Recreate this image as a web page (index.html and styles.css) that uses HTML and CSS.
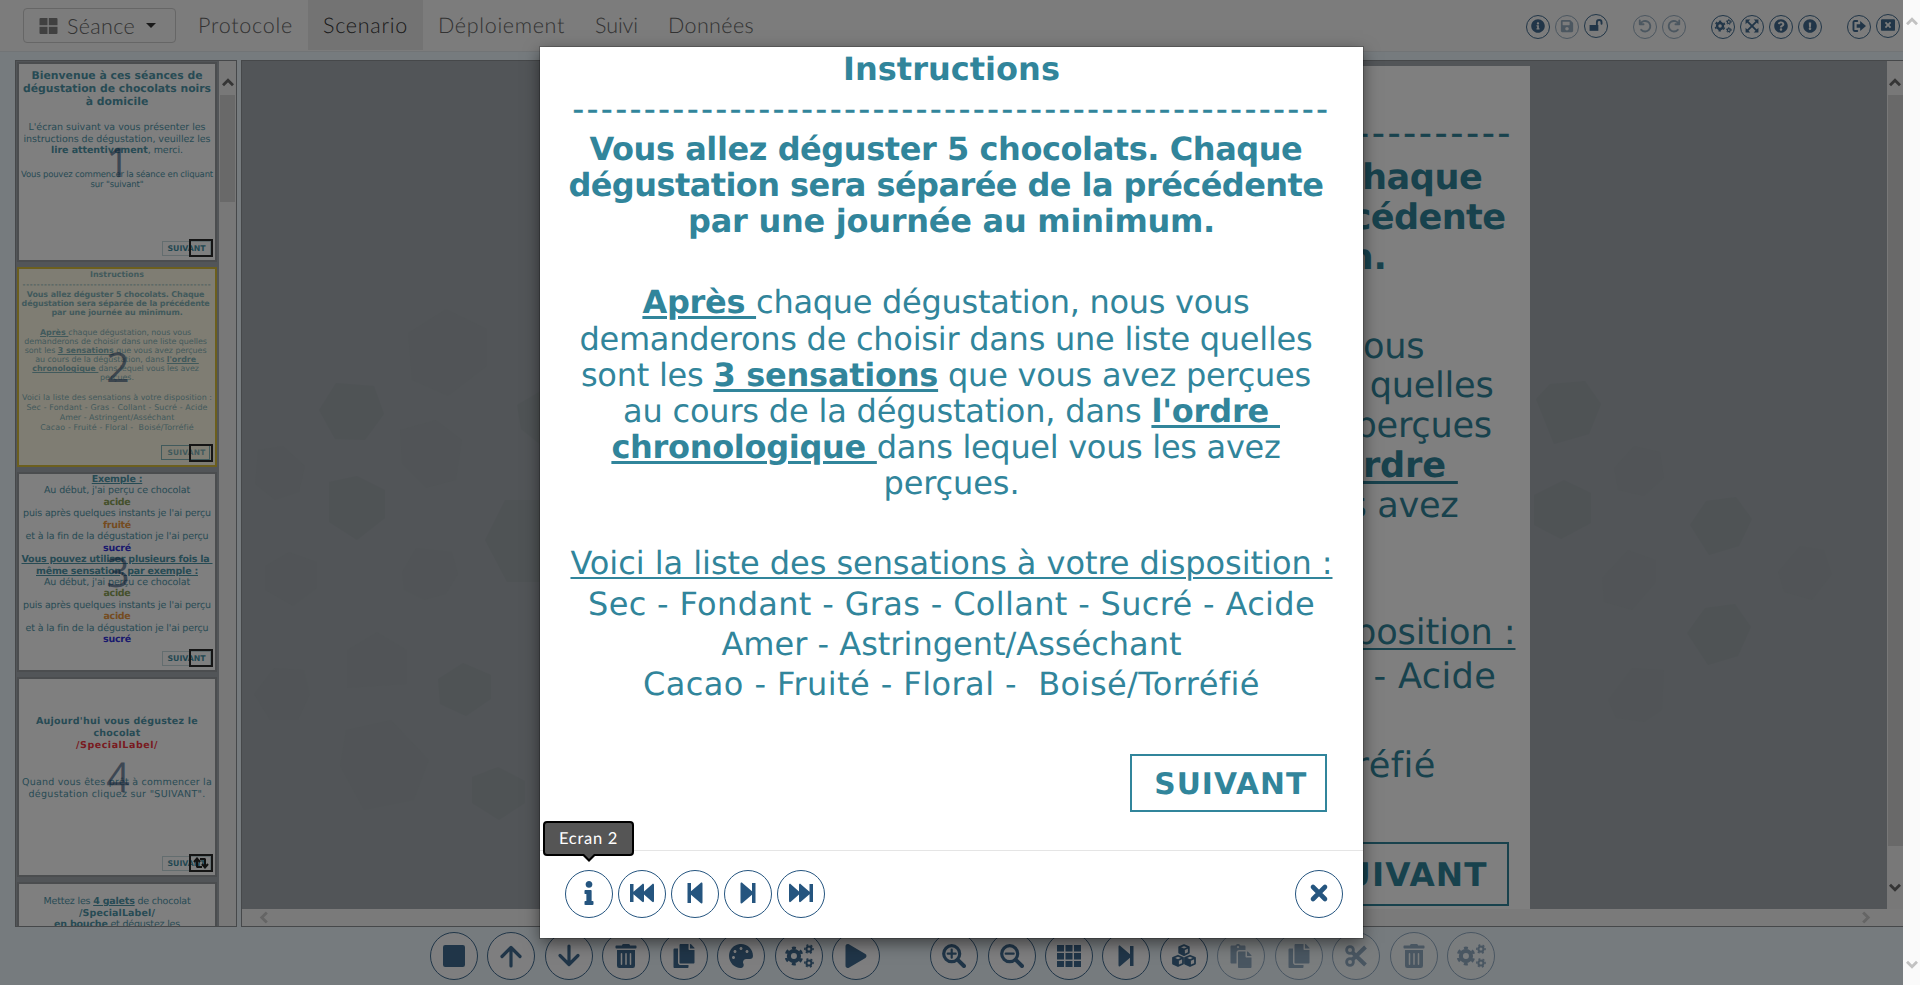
FILE: index.html
```html
<!DOCTYPE html>
<html lang="fr">
<head>
<meta charset="utf-8">
<title>Scenario</title>
<link rel="stylesheet" href="styles.css">
</head>
<body>
<svg class="sprite" aria-hidden="true">
  <symbol id="square" viewBox="0 0 24 24"><rect x="1" y="1" width="22" height="22" rx="2.2"/></symbol>
  <symbol id="up" viewBox="0 0 24 24"><path class="ln" d="M12 22V4M3 12.5L12 3.500l9 9"/></symbol>
  <symbol id="down" viewBox="0 0 24 24"><path class="ln" d="M12 2v18M3 11.500l9 9 9-9"/></symbol>
  <symbol id="trash" viewBox="0 0 448 512"><path d="M32 464a48 48 0 0 0 48 48h288a48 48 0 0 0 48-48V128H32zm272-256a16 16 0 0 1 32 0v224a16 16 0 0 1-32 0zm-96 0a16 16 0 0 1 32 0v224a16 16 0 0 1-32 0zm-96 0a16 16 0 0 1 32 0v224a16 16 0 0 1-32 0zM432 32H312l-9.400-18.700A24 24 0 0 0 281.100 0H166.800a23.720 23.720 0 0 0-21.400 13.300L136 32H16A16 16 0 0 0 0 48v32a16 16 0 0 0 16 16h416a16 16 0 0 0 16-16V48a16 16 0 0 0-16-16z"/></symbol>
  <symbol id="copy" viewBox="0 0 448 512"><path d="M320 448v40c0 13.255-10.745 24-24 24H24c-13.255 0-24-10.745-24-24V120c0-13.255 10.745-24 24-24h72v296c0 30.879 25.121 56 56 56h168zm0-344V0H152c-13.255 0-24 10.745-24 24v368c0 13.255 10.745 24 24 24h272c13.255 0 24-10.745 24-24V128H344c-13.200 0-24-10.800-24-24zm120.971-31.029L375.029 7.029A24 24 0 0 0 358.059 0H352v96h96v-6.059a24 24 0 0 0-7.029-16.970z"/></symbol>
  <symbol id="paste" viewBox="0 0 448 512"><path d="M128 184c0-30.879 25.122-56 56-56h136V56c0-13.255-10.745-24-24-24h-80.610C204.306 12.890 183.637 0 160 0s-44.306 12.890-55.390 32H24C10.745 32 0 42.745 0 56v336c0 13.255 10.745 24 24 24h104V184zm32-144c13.255 0 24 10.745 24 24s-10.745 24-24 24-24-10.745-24-24 10.745-24 24-24zm184 248h104v200c0 13.255-10.745 24-24 24H184c-13.255 0-24-10.745-24-24V184c0-13.255 10.745-24 24-24h136v104c0 13.200 10.800 24 24 24zm104-38.059V256h-96v-96h6.059a24 24 0 0 1 16.970 7.029l65.941 65.941a24.002 24.002 0 0 1 7.030 16.971z"/></symbol>
  <symbol id="palette" viewBox="0 0 512 512"><path d="M204.300 5C104.900 24.400 24.800 104.300 5.200 203.400c-37 187 131.700 326.400 258.800 306.700 41.200-6.400 61.400-54.600 42.500-91.700-23.100-45.400 9.900-98.400 60.900-98.400h79.700c35.800 0 64.800-29.600 64.900-65.300C511.500 97.100 368.100-26.900 204.300 5zM96 320c-17.700 0-32-14.300-32-32s14.300-32 32-32 32 14.300 32 32-14.300 32-32 32zm32-128c-17.700 0-32-14.300-32-32s14.300-32 32-32 32 14.300 32 32-14.300 32-32 32zm128-64c-17.700 0-32-14.300-32-32s14.300-32 32-32 32 14.300 32 32-14.300 32-32 32zm128 64c-17.700 0-32-14.300-32-32s14.300-32 32-32 32 14.300 32 32-14.300 32-32 32z"/></symbol>
  <symbol id="cogs" viewBox="0 0 640 512"><g fill="none" stroke="currentColor">
    <circle cx="212" cy="256" r="108" stroke-width="88"/><circle cx="212" cy="256" r="172" stroke-width="56" stroke-dasharray="84 96.100" transform="rotate(-104 212 256)"/>
    <circle cx="532" cy="108" r="54" stroke-width="44"/><circle cx="532" cy="108" r="88" stroke-width="32" stroke-dasharray="44 48.150" transform="rotate(-14 532 108)"/>
    <circle cx="532" cy="404" r="54" stroke-width="44"/><circle cx="532" cy="404" r="88" stroke-width="32" stroke-dasharray="44 48.150" transform="rotate(-14 532 404)"/></g></symbol>
  <symbol id="play" viewBox="0 0 448 512"><path d="M424.400 214.700L72.400 6.600C43.800-10.300 0 6.100 0 47.900V464c0 37.500 40.700 60.100 72.400 41.300l352-208c31.400-18.500 31.500-64.100 0-82.600z"/></symbol>
  <symbol id="zoomin" viewBox="0 0 24 24"><circle class="ln" cx="9.700" cy="9.700" r="8"/><path class="ln thick" d="M15.800 15.800l6.200 6.200"/><path class="ln thin" d="M9.700 5.700v8M5.700 9.700h8"/></symbol>
  <symbol id="zoomout" viewBox="0 0 24 24"><circle class="ln" cx="9.700" cy="9.700" r="8"/><path class="ln thick" d="M15.800 15.800l6.200 6.200"/><path class="ln thin" d="M5.700 9.700h8"/></symbol>
  <symbol id="grid" viewBox="0 0 24 24"><path d="M0 1h7v6.500H0zM8.500 1h7v6.500h-7zM17 1h7v6.500h-7zM0 9h7v6.500H0zM8.500 9h7v6.500h-7zM17 9h7v6.500h-7zM0 17h7v6H0zM8.500 17h7v6h-7zM17 17h7v6h-7z"/></symbol>
  <symbol id="next" viewBox="0 0 24 24"><path d="M4.500 2.800c0-1.200 1-1.600 1.900-.9L16 10.300V2h3.500v20H16v-8.300L6.400 22.100c-.9.700-1.900.3-1.900-.9z"/></symbol>
  <symbol id="prev" viewBox="0 0 24 24"><path d="M19.500 2.800c0-1.200-1-1.600-1.900-.9L8 10.300V2H4.500v20H8v-8.300l9.600 8.400c.9.700 1.900.3 1.900-.9z"/></symbol>
  <symbol id="last" viewBox="0 0 24 24"><path d="M0 4c0-1.100 1-1.500 1.800-.8L10 10.400V4c0-1.100 1-1.500 1.800-.8l8.700 7.600V3H24v18h-3.500v-7.800l-8.700 7.600c-.8.700-1.800.3-1.800-.8v-6.400l-8.200 7.200C1 21.500 0 21.100 0 20z"/></symbol>
  <symbol id="first" viewBox="0 0 24 24"><path d="M24 4c0-1.100-1-1.500-1.800-.8L14 10.400V4c0-1.100-1-1.500-1.800-.8l-8.700 7.600V3H0v18h3.500v-7.800l8.700 7.600c.8.700 1.800.3 1.800-.8v-6.400l8.200 7.200c.8.700 1.800.3 1.800-.8z"/></symbol>
  <symbol id="times" viewBox="0 0 24 24"><path d="M6 6l12 12m0-12L6 18" fill="none" stroke="currentColor" stroke-width="4.600" stroke-linecap="round"/></symbol>
  <symbol id="info" viewBox="0 0 192 512"><path d="M20 424.229h20V279.771H20c-11.046 0-20-8.954-20-20V212c0-11.046 8.954-20 20-20h112c11.046 0 20 8.954 20 20v212.229h20c11.046 0 20 8.954 20 20V492c0 11.046-8.954 20-20 20H20c-11.046 0-20-8.954-20-20v-47.771c0-11.046 8.954-20 20-20zM96 0C56.235 0 24 32.235 24 72s32.235 72 72 72 72-32.235 72-72S135.764 0 96 0z"/></symbol>
  <symbol id="cubes" viewBox="0 0 24 24"><g fill="none" stroke="currentColor" stroke-width="1.800" stroke-linejoin="round"><path d="M12 1.200l4.800 2v5.600l-4.800 2.300-4.800-2.300V3.200zM7.200 3.200L12 5.500l4.800-2.300M12 5.500v5.600"/><path d="M6 11.700l5 2.200v5.700L6 22l-5-2.400v-5.700zM1 13.900l5 2.300 5-2.300M6 16.200V22"/><path d="M18 11.700l5 2.200v5.700L18 22l-5-2.400v-5.700zM13 13.900l5 2.300 5-2.300M18 16.200V22"/></g><path d="M7.200 3.200L12 5.500v5.600L7.200 8.800zM1 13.900l5 2.300V22l-5-2.400zM13 13.900l5 2.300V22l-5-2.400z"/></symbol>
  <symbol id="cut" viewBox="0 0 24 24"><g fill="none" stroke="currentColor"><circle cx="6" cy="6" r="3.400" stroke-width="2.800"/><circle cx="6" cy="18" r="3.400" stroke-width="2.800"/><path d="M8.500 8.500L21.500 21M8.500 15.500L21.500 3" stroke-width="4"/></g></symbol>
  <symbol id="infoc" viewBox="0 0 512 512"><path d="M256 8C119.043 8 8 119.083 8 256c0 136.997 111.043 248 248 248s248-111.003 248-248C504 119.083 392.957 8 256 8zm0 110c23.196 0 42 18.804 42 42s-18.804 42-42 42-42-18.804-42-42 18.804-42 42-42zm56 254c0 6.627-5.373 12-12 12h-88c-6.627 0-12-5.373-12-12v-24c0-6.627 5.373-12 12-12h12v-64h-12c-6.627 0-12-5.373-12-12v-24c0-6.627 5.373-12 12-12h64c6.627 0 12 5.373 12 12v100h12c6.627 0 12 5.373 12 12v24z"/></symbol>
  <symbol id="save" viewBox="0 0 448 512"><path d="M433.941 129.941l-83.882-83.882A48 48 0 0 0 316.118 32H48C21.490 32 0 53.490 0 80v352c0 26.510 21.490 48 48 48h352c26.510 0 48-21.490 48-48V163.882a48 48 0 0 0-14.059-33.941zM224 416c-35.346 0-64-28.654-64-64 0-35.346 28.654-64 64-64s64 28.654 64 64c0 35.346-28.654 64-64 64zm96-304.520V212c0 6.627-5.373 12-12 12H76c-6.627 0-12-5.373-12-12V108c0-6.627 5.373-12 12-12h228.520c3.183 0 6.235 1.264 8.485 3.515l3.480 3.480A11.996 11.996 0 0 1 320 111.480z"/></symbol>
  <symbol id="unlock" viewBox="0 0 24 24"><path d="M1 12h15v10H1z"/><path class="ln" d="M13.500 12V7.500a4 4 0 0 1 8 0V10"/></symbol>
  <symbol id="undo" viewBox="0 0 24 24"><path class="ln" d="M3 2.500V9h6.500M4 8.500a9 9 0 1 1 1.500 10"/></symbol>
  <symbol id="redo" viewBox="0 0 24 24"><path class="ln" d="M21 2.500V9h-6.500M20 8.500a9 9 0 1 0-1.500 10"/></symbol>
  <symbol id="expand" viewBox="0 0 24 24"><path d="M1 1h8L1 9zM23 1v8l-8-8zM1 23v-8l8 8zM23 23h-8l8-8z"/><path class="ln" d="M4 4l16 16M20 4L4 20"/></symbol>
  <symbol id="helpc" viewBox="0 0 512 512"><path d="M504 256c0 136.997-111.043 248-248 248S8 392.997 8 256C8 119.083 119.043 8 256 8s248 111.083 248 248zM262.655 90c-54.497 0-89.255 22.957-116.549 63.758-3.536 5.286-2.353 12.415 2.715 16.258l34.699 26.310c5.205 3.947 12.621 3.008 16.665-2.122 17.864-22.658 30.113-35.797 57.303-35.797 20.429 0 45.698 13.148 45.698 32.958 0 14.976-12.363 22.667-32.534 33.976C247.128 238.528 216 254.941 216 296v4c0 6.627 5.373 12 12 12h56c6.627 0 12-5.373 12-12v-1.333c0-28.462 83.186-29.647 83.186-106.667 0-58.002-60.165-102-116.531-102zM256 338c-25.365 0-46 20.635-46 46 0 25.364 20.635 46 46 46s46-20.636 46-46c0-25.365-20.635-46-46-46z"/></symbol>
  <symbol id="alertc" viewBox="0 0 512 512"><path d="M504 256c0 136.997-111.043 248-248 248S8 392.997 8 256C8 119.083 119.043 8 256 8s248 111.083 248 248zm-248 50c-25.405 0-46 20.595-46 46s20.595 46 46 46 46-20.595 46-46-20.595-46-46-46zm-43.673-165.346l7.418 136c.347 6.364 5.609 11.346 11.982 11.346h48.546c6.373 0 11.635-4.982 11.982-11.346l7.418-136c.375-6.874-5.098-12.654-11.982-12.654h-63.383c-6.884 0-12.356 5.780-11.981 12.654z"/></symbol>
  <symbol id="exit" viewBox="0 0 24 24"><path class="ln" d="M9 3.500H4.500a2 2 0 0 0-2 2v13a2 2 0 0 0 2 2H9" stroke-linecap="butt"/><path d="M8 9h6V3.500L24 12l-10 8.500V15H8z"/></symbol>
  <symbol id="winclose" viewBox="0 0 24 24"><path fill-rule="evenodd" d="M2 2h20q2 0 2 2v16q0 2-2 2H2q-2 0-2-2V4q0-2 2-2zM6.500 8.700L9.800 12l-3.300 3.300 2.200 2.200L12 14.200l3.300 3.300 2.200-2.200L14.200 12l3.300-3.300-2.200-2.200L12 9.800 8.700 6.500z"/></symbol>
  <symbol id="large" viewBox="0 0 18 16"><path d="M0 1q0-1 1-1h7v7.300H0zM9.300 0H17q1 0 1 1v6.300H9.300zM0 8.700h8V16H1q-1 0-1-1zM9.300 8.700H18V15q0 1-1 1H9.300z"/></symbol>
  <symbol id="chev" viewBox="0 0 12 9"><path d="M1 7.300l5-5 5 5" fill="none" stroke="currentColor" stroke-width="2.900"/></symbol>
  <symbol id="retweet" viewBox="0 0 16 12"><path d="M4 10.500V3M1 5l3-3.500L7 5M4 10h5M12 1.500V9M15 7l-3 3.500L9 7M12 2H7" fill="none" stroke="currentColor" stroke-width="2"/></symbol>
</svg>

<div class="window">
  <div class="app">
    <header class="topbar">
      <button class="session"><svg class="i-large"><use href="#large"/></svg><span class="fit" data-w="68">Séance</span><i class="caret"></i></button>
      <nav class="nav">
        <a><span class="fit" data-w="95">Protocole</span></a>
        <a class="active"><span class="fit" data-w="85">Scenario</span></a>
        <a><span class="fit" data-w="127">Déploiement</span></a>
        <a><span class="fit" data-w="43">Suivi</span></a>
        <a><span class="fit" data-w="86">Données</span></a>
      </nav>
      <div class="tools">
        <div class="set"><b class="rb"><svg><use href="#infoc"/></svg></b><b class="rb off"><svg><use href="#save"/></svg></b><b class="rb raised"><svg><use href="#unlock"/></svg></b></div>
        <div class="set"><b class="rb off"><svg><use href="#undo"/></svg></b><b class="rb off"><svg><use href="#redo"/></svg></b></div>
        <div class="set"><b class="rb wide"><svg><use href="#cogs"/></svg></b><b class="rb"><svg><use href="#expand"/></svg></b><b class="rb"><svg><use href="#helpc"/></svg></b><b class="rb"><svg><use href="#alertc"/></svg></b></div>
        <div class="set"><b class="rb"><svg><use href="#exit"/></svg></b><b class="rb raised"><svg><use href="#winclose"/></svg></b></div>
      </div>
    </header>

    <main class="main">
      <aside class="thumbs">
        <div class="list">
          <div class="thumb"><div class="mini">
            <div class="m1">
              <p class="t10 b"><span class="fit" data-w="171">Bienvenue à ces séances de</span></p>
              <p class="t10 b"><span class="fit" data-w="188">dégustation de chocolats noirs</span></p>
              <p class="t10 b"><span class="fit" data-w="62.500">à domicile</span></p>
              <p class="t9 gap14"><span class="fit" data-w="177">L'écran suivant va vous présenter les</span></p>
              <p class="t9"><span class="fit" data-w="187">instructions de dégustation, veuillez les</span></p>
              <p class="t9"><span class="fit" data-w="132"><b>lire attentivement</b>, merci.</span></p>
              <p class="t8 gap13"><span class="fit" data-w="192">Vous pouvez commencer la séance en cliquant</span></p>
              <p class="t8"><span class="fit" data-w="53">sur "suivant"</span></p>
            </div></div>
            <span class="num">1</span><span class="go"><span class="fit" data-w="38">SUIVANT</span></span><span class="mark"></span>
          </div>
          <div class="thumb selected"><div class="mini"><div class="slide" data-copy="slide-2"></div></div>
            <span class="num">2</span><span class="mark"></span>
          </div>
          <div class="thumb"><div class="mini">
            <div class="m3">
              <p class="b u"><span class="fit" data-w="50.500">Exemple :</span></p>
              <p><span class="fit" data-w="146">Au début, j'ai perçu ce chocolat</span></p>
              <p class="b green"><span class="fit" data-w="27">acide</span></p>
              <p><span class="fit" data-w="188">puis après quelques instants je l'ai perçu</span></p>
              <p class="b orange"><span class="fit" data-w="28">fruité</span></p>
              <p><span class="fit" data-w="183">et à la fin de la dégustation je l'ai perçu</span></p>
              <p class="b blue"><span class="fit" data-w="28">sucré</span></p>
              <p class="b u"><span class="fit" data-w="191">Vous pouvez utiliser plusieurs fois la&nbsp;</span></p>
              <p class="b u"><span class="fit" data-w="162">même sensation, par exemple :</span></p>
              <p><span class="fit" data-w="146">Au début, j'ai perçu ce chocolat</span></p>
              <p class="b green"><span class="fit" data-w="27">acide</span></p>
              <p><span class="fit" data-w="188">puis après quelques instants je l'ai perçu</span></p>
              <p class="b orange"><span class="fit" data-w="27">acide</span></p>
              <p><span class="fit" data-w="183">et à la fin de la dégustation je l'ai perçu</span></p>
              <p class="b blue"><span class="fit" data-w="28">sucré</span></p>
            </div></div>
            <span class="num">3</span><span class="go"><span class="fit" data-w="38">SUIVANT</span></span><span class="mark"></span>
          </div>
          <div class="thumb"><div class="mini">
            <div class="m4">
              <p class="b"><span class="fit" data-w="162">Aujourd'hui vous dégustez le</span></p>
              <p class="b"><span class="fit" data-w="47">chocolat</span></p>
              <p class="b red"><span class="fit" data-w="82">/SpecialLabel/</span></p>
              <p class="gap25"><span class="fit" data-w="190">Quand vous êtes prêt à commencer la</span></p>
              <p><span class="fit" data-w="177">dégustation cliquez sur "SUIVANT".</span></p>
            </div></div>
            <span class="num">4</span><span class="go"><span class="fit" data-w="38">SUIVANT</span></span><span class="mark"><svg><use href="#retweet"/></svg></span>
          </div>
          <div class="thumb"><div class="mini">
            <div class="m5">
              <p><span class="fit" data-w="147">Mettez les <b class="u">4 galets</b> de chocolat</span></p>
              <p class="b"><span class="fit" data-w="76">/SpecialLabel/</span></p>
              <p><span class="fit" data-w="126"><b>en bouche</b> et dégustez les</span></p>
            </div></div>
          </div>
        </div>
        <div class="vbar"><svg class="ch"><use href="#chev"/></svg><i class="grip short"></i><svg class="ch dn"><use href="#chev"/></svg></div>
      </aside>

      <section class="work">
        <div class="canvas">
          <svg class="hexes" viewBox="242 61 1645 848" preserveAspectRatio="none">
            <g fill="#8e979d" opacity=".22">
              <path d="M319 410l17-27 38 3 10 28-19 26-30-1zM329 482l28-6 28 14v28l-28 22-28-18zM485 540l20-40h36v82h-34zM438 679l25-16 28 12v24l-25 17-26-12zM472 777l26-10 27 14v22l-26 17-27-17zM517 405l24-14v54l-20-16zM1536 399l14-15 35-3 16 23-12 30-35 10zM1534 495l30-15 27 13v30l-30 16-27-14zM1690 525l16-24 30-4 16 22-13 27-30 9zM1687 633l18-25 30-4 16 23-13 29-30 9z"/>
            </g>
            <g fill="#929b9f" opacity=".1">
              <path d="M408 333l38-24 41 20v37l-39 30-36-16zM400 430l36-10 26 20-6 40-30 8-24-24zM258 450l25-4 22 20-6 26-24 8-20-16zM265 566l24-14 28 10v26l-24 18-28-16zM402 572l14-24 36 4 6 22-12 20-22 6-20-10zM347 650l30-18 30 18v34l-60 4zM254 694l20-26 30 2 6 24-12 26h-28zM346 730l45-10 38 40-15 40-50 10-24-44zM1614 468l20-22 26 6 4 26-20 18-26-6zM1602 578l26-28 28 10v22l-24 28-28-8zM1778 572l22-26 24 4 8 24-20 26-28-8zM1608 700l24-32 32 2-2 40-18 12-28-4z"/>
            </g>
          </svg>
          <div class="slide" data-copy="slide-2"></div>
        </div>
        <div class="vbar"><svg class="ch"><use href="#chev"/></svg><i class="grip"></i><svg class="ch dn"><use href="#chev"/></svg></div>
        <div class="hbar"><svg class="ch lt"><use href="#chev"/></svg><svg class="ch rt"><use href="#chev"/></svg></div>
      </section>
    </main>

    <footer class="bottombar">
      <div class="set">
        <b class="cb"><svg><use href="#square"/></svg></b><b class="cb"><svg><use href="#up"/></svg></b><b class="cb"><svg><use href="#down"/></svg></b><b class="cb"><svg><use href="#trash"/></svg></b><b class="cb"><svg><use href="#copy"/></svg></b><b class="cb"><svg><use href="#palette"/></svg></b><b class="cb wide"><svg><use href="#cogs"/></svg></b><b class="cb"><svg><use href="#play"/></svg></b>
      </div>
      <div class="set">
        <b class="cb"><svg><use href="#zoomin"/></svg></b><b class="cb"><svg><use href="#zoomout"/></svg></b><b class="cb"><svg><use href="#grid"/></svg></b><b class="cb"><svg><use href="#next"/></svg></b><b class="cb"><svg><use href="#cubes"/></svg></b><b class="cb off"><svg><use href="#paste"/></svg></b><b class="cb off"><svg><use href="#copy"/></svg></b><b class="cb off"><svg><use href="#cut"/></svg></b><b class="cb off"><svg><use href="#trash"/></svg></b><b class="cb off wide"><svg><use href="#cogs"/></svg></b>
      </div>
    </footer>

    <div class="overlay">
      <div class="modal">
        <div class="slide" id="slide-2">
          <p class="head b"><span class="fit" data-w="217">Instructions</span></p>
          <p class="head rule"><span class="fit" data-w="758">-----------------------------------------------------</span></p>
          <p class="b trail first"><span class="fit" data-w="713">Vous allez déguster 5 chocolats. Chaque</span></p>
          <p class="b trail"><span class="fit" data-w="755">dégustation sera séparée de la précédente</span></p>
          <p class="b"><span class="fit" data-w="527">par une journée au minimum.</span></p>
          <p class="trail para"><span class="fit" data-w="607"><b class="u">Après&nbsp;</b>chaque dégustation, nous vous</span></p>
          <p class="trail"><span class="fit" data-w="733">demanderons de choisir dans une liste quelles</span></p>
          <p class="trail"><span class="fit" data-w="730">sont les <b class="u">3 sensations</b> que vous avez perçues</span></p>
          <p><span class="fit" data-w="657">au cours de la dégustation, dans <b class="u">l'ordre&nbsp;</b></span></p>
          <p class="trail"><span class="fit" data-w="669"><b class="u">chronologique&nbsp;</b>dans lequel vous les avez</span></p>
          <p><span class="fit" data-w="136">perçues.</span></p>
          <p class="list-line start u thinu"><span class="fit" data-w="762">Voici la liste des sensations à votre disposition :</span></p>
          <p class="list-line"><span class="fit" data-w="727">Sec - Fondant - Gras - Collant - Sucré - Acide</span></p>
          <p class="list-line"><span class="fit" data-w="460">Amer - Astringent/Asséchant</span></p>
          <p class="list-line"><span class="fit" data-w="617">Cacao - Fruité - Floral -&nbsp; Boisé/Torréfié</span></p>
          <div class="next"><span class="fit" data-w="153">SUIVANT</span></div>
        </div>
        <div class="modal-foot">
          <div class="group">
            <b class="mb"><svg><use href="#info"/></svg><span class="tip"><span class="fit" data-w="59">Ecran 2</span></span></b>
            <b class="mb"><svg><use href="#first"/></svg></b><b class="mb"><svg><use href="#prev"/></svg></b><b class="mb"><svg><use href="#next"/></svg></b><b class="mb"><svg><use href="#last"/></svg></b>
          </div>
          <b class="mb"><svg><use href="#times"/></svg></b>
        </div>
      </div>
    </div>
  </div>
  <div class="pagebar"><svg class="ch"><use href="#chev"/></svg><svg class="ch dn"><use href="#chev"/></svg></div>
</div>
<script src="fit.js"></script>
</body>
</html>
```
FILE: styles.css
```css
* { box-sizing: border-box; }
body { margin: 0; font-family: "Century Gothic", Lato, sans-serif; overflow: hidden; text-rendering: geometricPrecision; }
p { margin: 0; white-space: nowrap; }
svg { fill: currentColor; display: block; flex: none; }
.sprite { position: absolute; width: 0; height: 0; }
.ln { fill: none; stroke: currentColor; stroke-width: 3.2; stroke-linecap: round; stroke-linejoin: round; }
.thin { stroke-width: 2.200; }
.thick { stroke-width: 4; }
.fit { white-space: nowrap; }
.b { font-weight: 700; }
.u { text-decoration: underline; }

.window { display: flex; width: 1920px; height: 985px; }
.app { position: relative; width: 1903px; height: 985px; display: flex; flex-direction: column; background: #edf6fd; overflow: hidden; }
.pagebar { width: 17px; background: #fafafa; color: #c2c2c2; display: flex; flex-direction: column; justify-content: space-between; align-items: center; padding: 17px 0 16px; }
.ch { width: 12px; height: 9px; }
.dn { transform: rotate(180deg); }

/* top bar */
.topbar { height: 52px; flex: none; display: flex; align-items: flex-start; background: #f8f8f8; border-bottom: 1px solid #e2e8ec; padding-left: 23px; font-size: 21.500px; font-weight: 300; color: #666; }
.session { display: flex; align-items: center; width: 153px; height: 35px; margin: 8px 7px 0 0; padding: 0 0 0 15px; background: transparent; border: 1px solid #ccc; border-radius: 4px; font: inherit; color: #666; }
.i-large { width: 19px; height: 16px; margin-right: 9px; color: #808080; }
.caret { margin-left: 11px; border: 5px solid transparent; border-top-color: #333; border-bottom: 0; }
.nav { display: flex; height: 50px; }
.nav a { padding: 0 15px; line-height: 50px; }
.nav .active { background: #e7e7e7; color: #333; }
.tools { margin-left: auto; display: flex; gap: 25px; padding: 15px 3px 0 0; }
.set { display: flex; gap: 5px; }
.rb { width: 24px; height: 24px; border: 1px solid #25557f; border-radius: 50%; color: #25557f; display: flex; align-items: center; justify-content: center; opacity: .86; padding-bottom: 2px; }
.rb svg { width: 14px; height: 14px; }
.rb.wide svg { width: 18px; }
.raised { margin-top: -1px; height: 24px; }
.rb.off, .cb.off { opacity: .45; }

/* main area */
.main { display: flex; gap: 4px; height: 867px; margin: 8px 0 0 15px; }
.thumbs { width: 222px; display: grid; grid-template-columns: 1fr 17px; background: #a4abb0; border: 1px solid #8c9194; overflow: hidden; }
.list { padding: 1px; display: flex; flex-direction: column; gap: 5px; }
.thumb { position: relative; width: 200px; height: 200px; flex: none; background: #fff; border: 2px solid #979b9e; font-family: Verdana, "DejaVu Sans", sans-serif; color: #31859b; text-align: center; }
.mini { width: 196px; height: 196px; display: flex; flex-direction: column; align-items: center; opacity: .85; }
.mini p { display: flex; justify-content: center; font-size: 9.500px; }
.mini .t10 { font-size: 10.800px; line-height: 13px; }
.mini .t9 { line-height: 11.500px; }
.mini .t8 { font-size: 8.500px; line-height: 10px; }
.m1 { padding-top: 5px; }
.gap14 { margin-top: 14px; }
.gap13 { margin-top: 13.500px; }
.gap25 { margin-top: 25px; }
.m3 { line-height: 11.430px; }
.m4 { padding-top: 37px; line-height: 12px; }
.m5 { padding-top: 12px; line-height: 11.700px; }
.green { color: #76923c; }
.orange { color: #e8871e; }
.blue { color: #1010d8; }
.red { color: #f01020; }
.num { position: absolute; left: 86px; top: 68px; width: 26px; text-align: center; font: 41px/60px "Open Sans", sans-serif; color: #24456e; opacity: .6; }
.go { position: absolute; left: 143px; top: 177px; width: 49px; height: 15px; border: 1px solid #c2d6db; font-size: 7.800px; font-weight: 700; line-height: 14px; opacity: .9; }
.mark { position: absolute; left: 170px; top: 175px; width: 24px; height: 18px; border: 2px solid #2b2b2b; color: #222; padding: 1px 2px; }
.mark svg { width: 16px; height: 12px; }
.selected { background: #fffbe6; border-color: #d9be3c; }
.selected .mini { opacity: .6; }
.selected .thinu { text-decoration: none; }

.vbar { display: flex; flex-direction: column; align-items: center; background: #f0f0f0; padding: 17px 0; color: #6a6a6a; }
.vbar .dn { margin-top: auto; }
.grip { width: 15px; height: 751px; margin-top: 8px; background: #d2d2d2; }
.grip.short { height: 107px; }
.thumbs .vbar { padding-bottom: 16px; }

.work { flex: 1; display: grid; grid-template: 848px 17px / 1fr 16px; border: 1px solid #8c9194; border-right: 0; }
.canvas { position: relative; background: #a4abb0; padding: 5px 0 0 422px; overflow: hidden; }
.hexes { position: absolute; inset: 0; width: 100%; height: 100%; }
.work .vbar { padding-bottom: 17px; }
.hbar { grid-column: 1 / 3; background: #f4f4f4; color: #cacaca; display: flex; justify-content: space-between; align-items: center; padding: 0 31px 0 16px; }
.lt { transform: rotate(-90deg); }
.rt { transform: rotate(90deg); }

/* slide: every length is in em, so one font-size scales the whole slide */
.slide { position: relative; flex: none; width: 24.656em; height: 25em; padding-top: .094em; background: #fff; color: #31859b; font-family: Verdana, "DejaVu Sans", sans-serif; font-size: 32px; line-height: 1.131em; }
.slide p { display: flex; justify-content: center; font-size: 1em; white-space: pre; }
.slide .head { line-height: 1.188em; }
.slide .rule { position: relative; top: .06em; -webkit-text-stroke: .012em currentColor; }
.slide .trail { padding-right: .35em; }
.slide .first { margin-top: .156em; }
.slide .para { margin-top: 1.400em; }
.slide .list-line { line-height: 1.260em; }
.slide .start { margin-top: 1.306em; }
.slide .u { text-decoration-thickness: .085em; text-underline-offset: .1em; }
.slide .thinu { text-decoration-thickness: .06em; }
.next { width: 6.156em; height: 1.828em; margin: 1.540em .600em 0 auto; border: .0625em solid #31859b; display: flex; justify-content: center; align-items: center; padding: .12em 0 0 .150em; font-weight: 700; }
.next .fit { font-size: .93em; }
.canvas .slide { font-size: 35.136px; height: 850px; }
.mini .slide { font-size: 7.970px; background: none; height: 196px; }

/* bottom bar */
.bottombar { display: flex; gap: 50px; padding: 5px 0 0 430px; }
.bottombar .set { gap: 9.450px; }
.cb { width: 48px; height: 48px; border: 1px solid #25557f; border-radius: 50%; background: #fff; color: #25557f; display: flex; align-items: center; justify-content: center; opacity: .86; }
.cb svg { width: 24px; height: 24px; }
.cb.wide svg { width: 30px; }

/* preview dialog */
.overlay { position: absolute; inset: 0; background: rgba(0,0,0,.5); display: flex; justify-content: center; align-items: flex-start; padding-top: 47px; }
.modal { width: 823px; height: 891px; background: #fff; box-shadow: 0 0 0 1px rgba(0,0,0,.2), 0 5px 15px rgba(0,0,0,.5); display: flex; flex-direction: column; align-items: center; }
.modal .slide { height: 803px; }
.modal-foot { width: 100%; flex: 1; border-top: 1px solid #e5e5e5; padding: 19px 20px 0 25px; display: flex; justify-content: space-between; }
.group { display: flex; gap: 5px; }
.mb { position: relative; width: 48px; height: 48px; border: 1px solid #25557f; border-radius: 50%; color: #25557f; display: flex; align-items: center; justify-content: center; padding-bottom: 2px; }
.mb svg { width: 24px; height: 24px; }
.tip { position: absolute; left: -23px; top: -50px; width: 91px; height: 35px; background: #555; border: 2px solid #000; border-radius: 4px; color: #fff; font-size: 16.500px; font-weight: 400; line-height: 31px; text-align: center; }
.tip::before, .tip::after { content: ""; position: absolute; left: 36px; top: 31px; border: 8px solid transparent; border-top-color: #000; border-bottom: 0; }
.tip::after { left: 38px; top: 30px; border-width: 6px 6px 0; border-top-color: #555; }
```
FILE: fit.js
```js
// Fill the thumbnail and the editor with the previewed slide.
document.querySelectorAll('[data-copy]').forEach(function (el) {
  el.innerHTML = document.getElementById(el.dataset.copy).innerHTML;
});

// Adjust the tracking of each line so that it takes its nominal width.
document.querySelectorAll('.fit').forEach(function (el) {
  var slide = el.closest('.slide');
  var scale = slide ? parseFloat(getComputedStyle(slide).fontSize) / 32 : 1;
  var range = document.createRange();
  range.selectNodeContents(el);
  var natural = range.getBoundingClientRect().width;
  var gap = (el.dataset.w * scale - natural) / el.textContent.length;
  el.style.letterSpacing = gap.toFixed(4) + 'px';
});
```
